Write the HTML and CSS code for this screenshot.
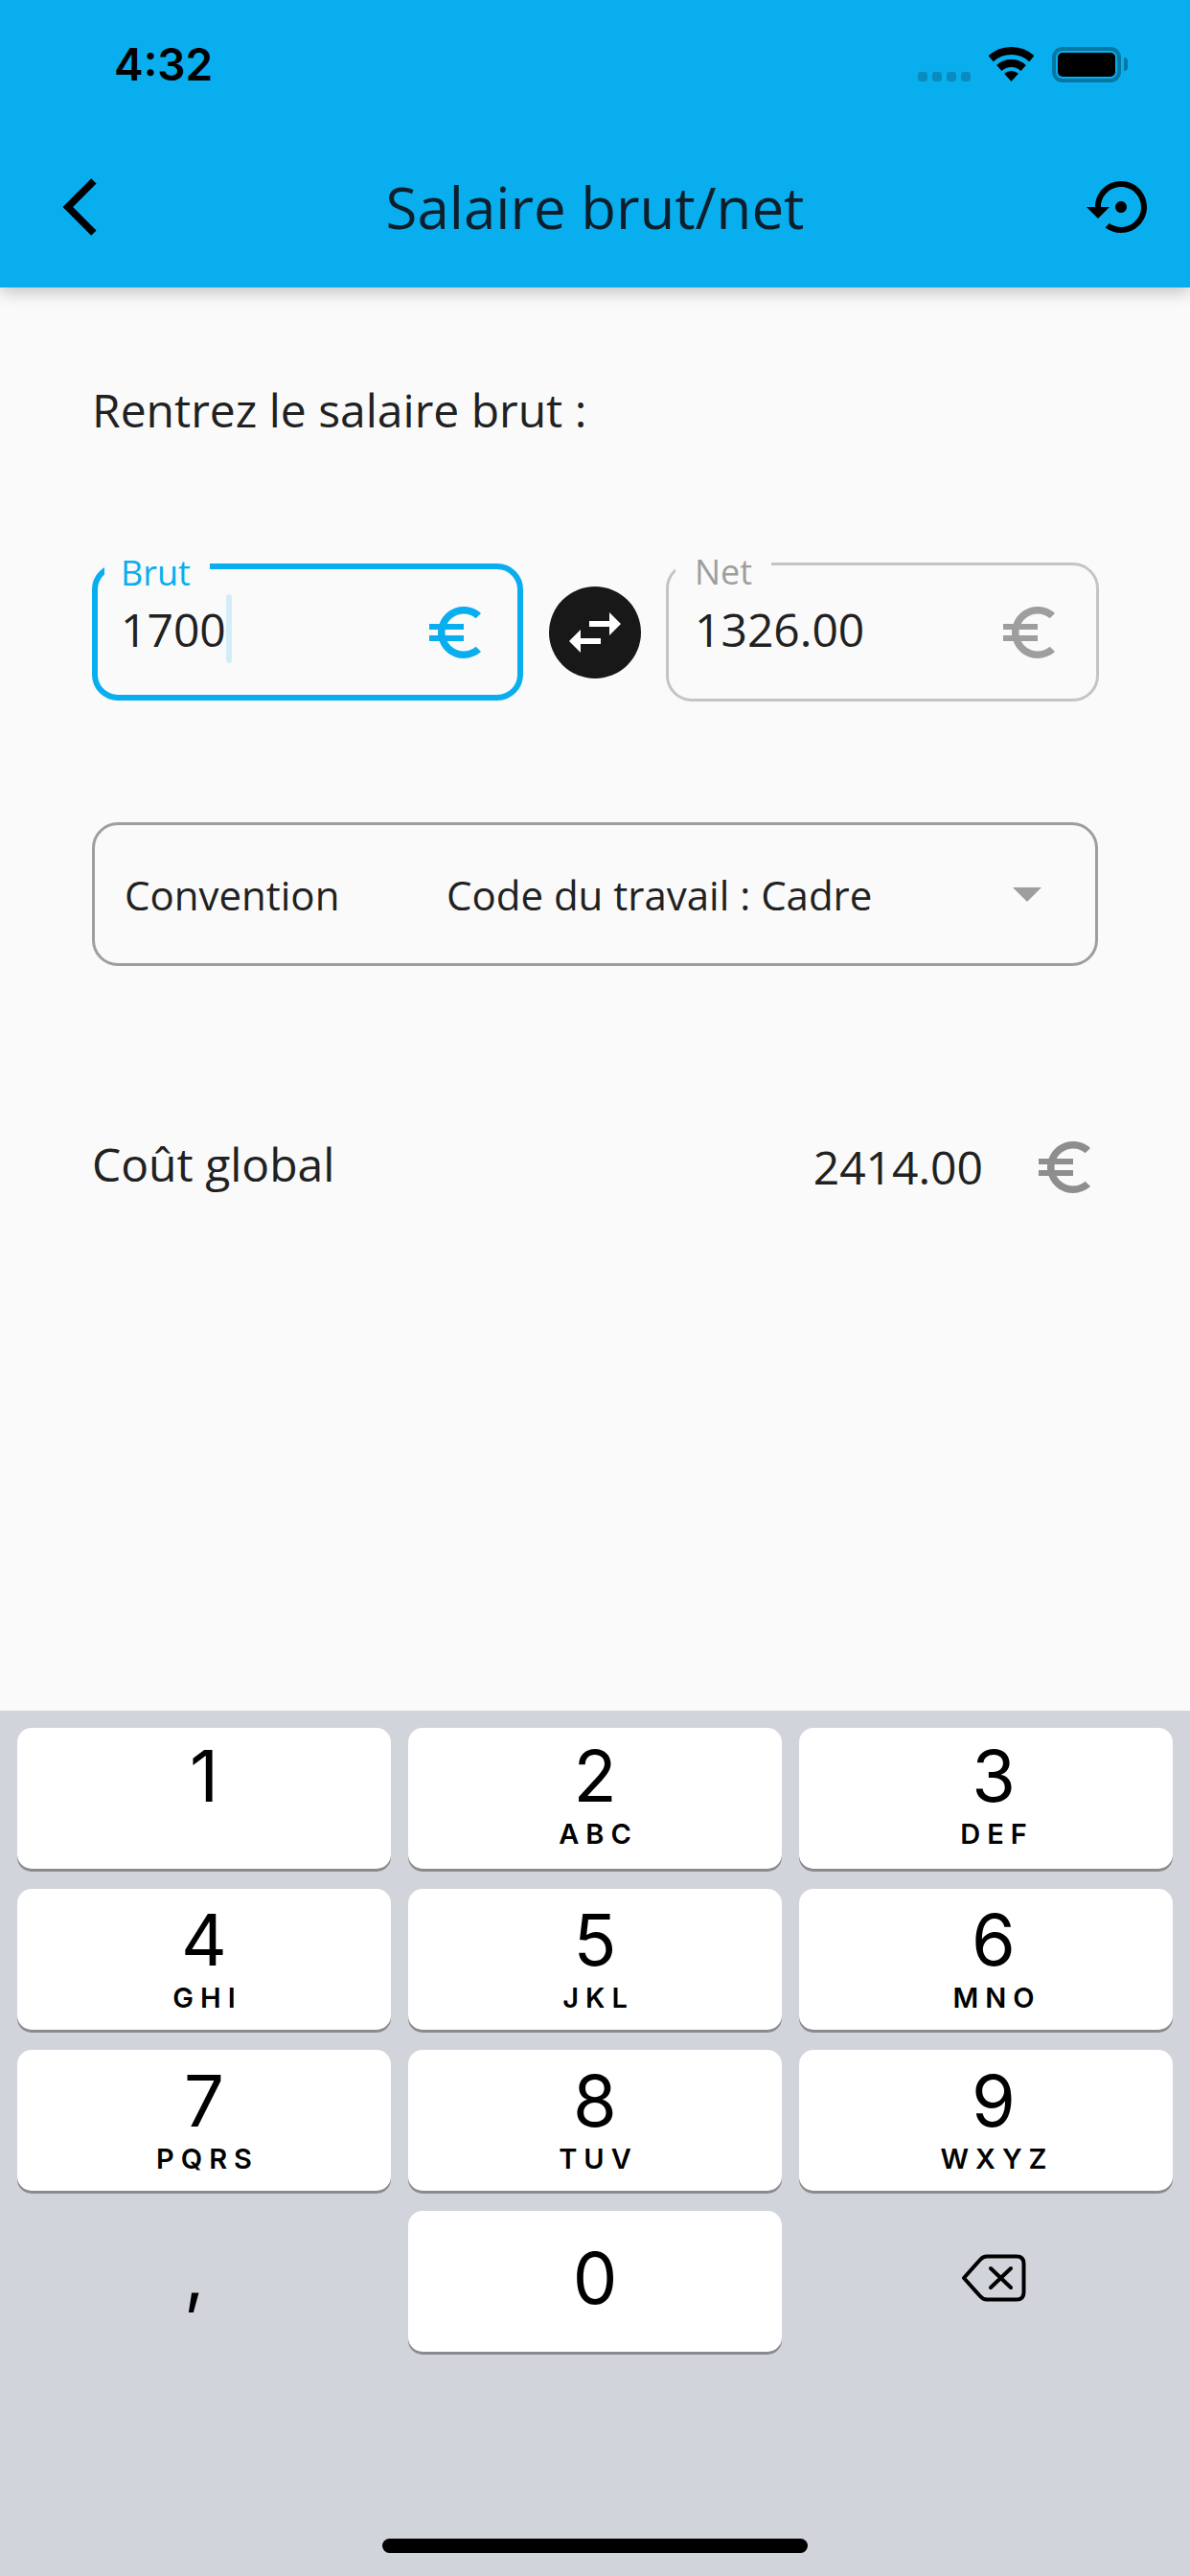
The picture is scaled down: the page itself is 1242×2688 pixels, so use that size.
FILE: index.html
```html
<!DOCTYPE html>
<html lang="fr">
<head>
<meta charset="UTF-8">
<meta name="viewport" content="width=device-width, initial-scale=1.0">
<title>Salaire brut/net</title>
<link rel="stylesheet" href="styles.css">
</head>
<body>
<header class="app-header">
    <div class="status-bar">
        <span class="status-time">4:32</span>
        <div class="status-icons">
            <div class="signal"><i></i><i></i><i></i><i></i></div>
            <svg class="wifi" width="47" height="36" viewBox="0 0 47 36">
                <path d="M2.1 12.2A32 32 0 0 1 44.9 12.2" fill="none" stroke="#000" stroke-width="8"/>
                <path d="M10.8 21.9A19 19 0 0 1 36.2 21.9" fill="none" stroke="#000" stroke-width="8"/>
                <path d="M23.5 36L16.1 27.8A11 11 0 0 1 30.9 27.8Z" fill="#000"/>
            </svg>
            <div class="battery"><div class="battery-level"></div></div>
            <div class="battery-nub"></div>
        </div>
    </div>
    <div class="toolbar">
        <svg class="toolbar-icon" width="72" height="72" viewBox="0 0 24 24">
            <path d="M17.51 3.87L15.73 2.1 5.84 12l9.9 9.9 1.77-1.77L9.38 12l8.13-8.13z"/>
        </svg>
        <h1 class="toolbar-title">Salaire brut/net</h1>
        <svg class="toolbar-icon" width="72" height="72" viewBox="0 0 24 24">
            <path d="M14 12c0-1.1-.9-2-2-2s-2 .9-2 2 .9 2 2 2 2-.9 2-2zm-2-9c-4.97 0-9 4.03-9 9H0l4 4 4-4H5c0-3.87 3.13-7 7-7s7 3.13 7 7-3.13 7-7 7c-1.51 0-2.91-.49-4.06-1.3l-1.42 1.44C8.04 20.3 9.94 21 12 21c4.97 0 9-4.03 9-9s-4.03-9-9-9z"/>
        </svg>
    </div>
</header>

<main class="content">
    <p class="prompt">Rentrez le salaire brut :</p>

    <div class="amounts">
        <div class="field field-active">
            <span class="field-label">Brut</span>
            <span class="field-value">1700<span class="caret"></span></span>
            <svg class="euro" width="72" height="72" viewBox="0 0 24 24"><use href="#euro-path"/></svg>
        </div>
        <button class="swap">
            <svg width="72" height="72" viewBox="0 0 24 24">
                <path fill="#fff" d="M6.99 11L3 15l3.99 4v-3H14v-2H6.99v-3zM21 9l-4-4v3h-7.01v2H17v3l4-4z"/>
            </svg>
        </button>
        <div class="field field-idle">
            <span class="field-label">Net</span>
            <span class="field-value">1326.00</span>
            <svg class="euro" width="72" height="72" viewBox="0 0 24 24"><use href="#euro-path"/></svg>
        </div>
    </div>

    <div class="select">
        <span class="select-label">Convention</span>
        <span class="select-value">Code du travail : Cadre</span>
        <svg class="select-arrow" width="30" height="15" viewBox="0 0 30 15"><path d="M0 0H30L15 15Z"/></svg>
    </div>

    <div class="total">
        <span class="total-label">Coût global</span>
        <span class="total-value">2414.00</span>
        <svg class="euro euro-total" width="72" height="72" viewBox="0 0 24 24"><use href="#euro-path"/></svg>
    </div>
</main>

<section class="keyboard">
    <div class="keys">
        <div class="key"><span class="digit">1</span></div>
        <div class="key"><span class="digit">2</span><span class="letters">ABC</span></div>
        <div class="key"><span class="digit">3</span><span class="letters">DEF</span></div>
        <div class="key key-low"><span class="digit">4</span><span class="letters">GHI</span></div>
        <div class="key key-low"><span class="digit">5</span><span class="letters">JKL</span></div>
        <div class="key key-low"><span class="digit">6</span><span class="letters">MNO</span></div>
        <div class="key key-low"><span class="digit">7</span><span class="letters">PQRS</span></div>
        <div class="key key-low"><span class="digit">8</span><span class="letters">TUV</span></div>
        <div class="key key-low"><span class="digit">9</span><span class="letters">WXYZ</span></div>
        <div class="key key-plain"><span class="comma">,</span></div>
        <div class="key key-zero"><span class="digit">0</span></div>
        <div class="key key-plain">
            <svg width="68" height="50" viewBox="0 0 68 50" fill="none" stroke="#000" stroke-width="4" stroke-linecap="round" stroke-linejoin="round">
                <path d="M3 25L20 6Q23 2.500 27 2.500H58Q65.500 2.500 65.500 10V40Q65.500 47.500 58 47.500H27Q23 47.500 20 44Z"/>
                <path d="M31 15L52 35M52 15L31 35"/>
            </svg>
        </div>
    </div>
    <div class="home-indicator"></div>
</section>

<svg width="0" height="0" class="defs">
    <defs>
        <path id="euro-path" d="M15 18.5c-2.51 0-4.68-1.42-5.76-3.5H15v-2H8.58c-.05-.33-.08-.66-.08-1s.03-.67.08-1H15V9H9.24C10.32 6.92 12.5 5.500 15 5.500c1.61 0 3.09.59 4.23 1.57L21 5.3C19.41 3.87 17.3 3 15 3c-3.92 0-7.24 2.51-8.48 6H3v2h3.06c-.04.33-.06.66-.06 1s.02.67.06 1H3v2h3.52c1.24 3.49 4.56 6 8.48 6 2.31 0 4.41-.87 6-2.3l-1.78-1.77c-1.13.98-2.6 1.57-4.22 1.57z"/>
    </defs>
</svg>
</body>
</html>
```

FILE: styles.css
```css
* {
    box-sizing: border-box;
}

html, body {
    margin: 0;
    padding: 0;
}

body {
    width: 1242px;
    height: 2688px;
    overflow: hidden;
    background-color: #fafafa;
    font-family: "Open Sans", sans-serif;
    color: #212121;
    display: flex;
    flex-direction: column;
}

.defs {
    position: absolute;
}

/* header */
.app-header {
    height: 300px;
    flex: none;
    background-color: #09aeef;
    box-shadow: 0 6px 15px rgba(0, 0, 0, 0.2);
    position: relative;
}

.status-bar {
    height: 132px;
    display: flex;
    justify-content: space-between;
    padding: 49px 65px 0 119px;
}

.status-time {
    font-family: Inter, sans-serif;
    font-weight: 600;
    font-size: 46px;
    line-height: 36px;
    color: #000;
}

.status-icons {
    display: flex;
    align-items: flex-start;
}

.signal {
    display: flex;
    gap: 5px;
    margin: 26px 19px 0 0;
}

.signal i {
    width: 10px;
    height: 10px;
    border-radius: 3px;
    background-color: #0a8bc0;
}

.wifi {
    margin-right: 19px;
}

.battery {
    width: 72px;
    height: 37px;
    border: 4px solid #0676a3;
    border-radius: 11px;
    padding: 2px;
}

.battery-level {
    height: 100%;
    background-color: #000;
    border-radius: 5px;
}

.battery-nub {
    width: 4px;
    height: 14px;
    margin: 11px 0 0 3px;
    background-color: #0676a3;
    border-radius: 0 4px 4px 0;
}

.toolbar {
    height: 168px;
    padding: 0 36px;
    display: grid;
    grid-template-columns: 84px 1fr 84px;
    align-items: center;
}

.toolbar-icon {
    justify-self: end;
}

.toolbar-title {
    margin: 0;
    font-size: 60px;
    font-weight: 400;
    text-align: center;
    color: #0d1f2b;
}

/* form */
.content {
    flex: 1;
    padding: 0 96px;
}

.prompt {
    margin: 0;
    padding-top: 95px;
    font-size: 48px;
    line-height: 66px;
}

.amounts {
    margin-top: 126px;
    display: flex;
    align-items: center;
    gap: 26px;
}

.field {
    position: relative;
    display: flex;
    align-items: center;
    justify-content: space-between;
    border-radius: 27px;
    flex: none;
}

.field-active {
    width: 450px;
    height: 143px;
    border: 6px solid #09aeef;
    color: #09aeef;
    padding: 0 29px 0 24px;
}

.field-idle {
    width: 452px;
    height: 145px;
    border: 3px solid #c4c4c4;
    color: #9e9e9e;
    padding: 0 34px 0 27px;
}

.field-label {
    position: absolute;
    left: 7px;
    background-color: #fafafa;
    font-size: 36px;
    line-height: 36px;
    padding: 0 20px;
}

.field-active .field-label {
    top: -14px;
    padding-left: 17px;
}

.field-idle .field-label {
    top: -11px;
}

.field-value {
    position: relative;
    font-size: 48px;
    line-height: 66px;
    margin-bottom: 5px;
    color: #212121;
}

.caret {
    position: absolute;
    top: -4px;
    width: 6px;
    height: 72px;
    border-radius: 3px;
    background-color: #d4eef9;
}

.euro {
    fill: currentColor;
    flex: none;
}

.swap {
    width: 96px;
    height: 96px;
    flex: none;
    margin-left: 1px;
    padding: 0;
    border: none;
    border-radius: 50%;
    background-color: #181818;
    display: flex;
    align-items: center;
    justify-content: center;
}

.select {
    margin-top: 126px;
    height: 150px;
    border: 3px solid #9e9e9e;
    border-radius: 27px;
    display: flex;
    align-items: center;
    padding: 0 56px 0 31px;
}

.select-label {
    width: 336px;
    font-size: 42px;
}

.select-value {
    flex: 1;
    font-size: 42px;
}

.select-arrow {
    fill: #9e9e9e;
}

.total {
    margin-top: 174px;
    display: flex;
    align-items: center;
    height: 72px;
}

.total-label {
    flex: 1;
    font-size: 48px;
    margin-bottom: 7px;
}

.total-value {
    font-size: 48px;
    margin: 0 49px 2px 0;
}

.euro-total {
    color: #8e8e8e;
    margin-right: -1px;
}

/* keyboard */
.keyboard {
    height: 903px;
    flex: none;
    background-color: #d1d4da;
    padding: 18px 18px 0;
    position: relative;
}

.keys {
    display: grid;
    grid-template-columns: repeat(3, 390px);
    grid-auto-rows: 147px;
    gap: 21px 18px;
}

.key {
    background-color: #fff;
    border-radius: 15px;
    box-shadow: 0 3px 0 #8a8b8f;
    display: flex;
    flex-direction: column;
    align-items: center;
    color: #000;
    font-family: Inter, sans-serif;
}

/* the right column sits a little off the key centre on the real keyboard */
.key:nth-child(3n) {
    padding-left: 16px;
}

.key-low {
    padding-top: 3px;
}

.digit {
    font-size: 74px;
    line-height: 74px;
    margin-top: 13px;
}

.letters {
    font-size: 29px;
    font-weight: 600;
    line-height: 30px;
    letter-spacing: 7px;
    padding-left: 7px;
    margin-top: 9px;
}

.key-zero {
    justify-content: center;
}

.key-zero .digit {
    margin-top: 0;
    margin-bottom: 8px;
}

.key-plain {
    background: none;
    box-shadow: none;
    justify-content: center;
}

.key-plain svg {
    margin-bottom: 7px;
}

.comma {
    font-size: 74px;
    line-height: 74px;
    margin: 0 20px 16px 0;
}

.home-indicator {
    position: absolute;
    left: 399px;
    top: 864px;
    width: 444px;
    height: 15px;
    border-radius: 8px;
    background-color: #000;
}
```
